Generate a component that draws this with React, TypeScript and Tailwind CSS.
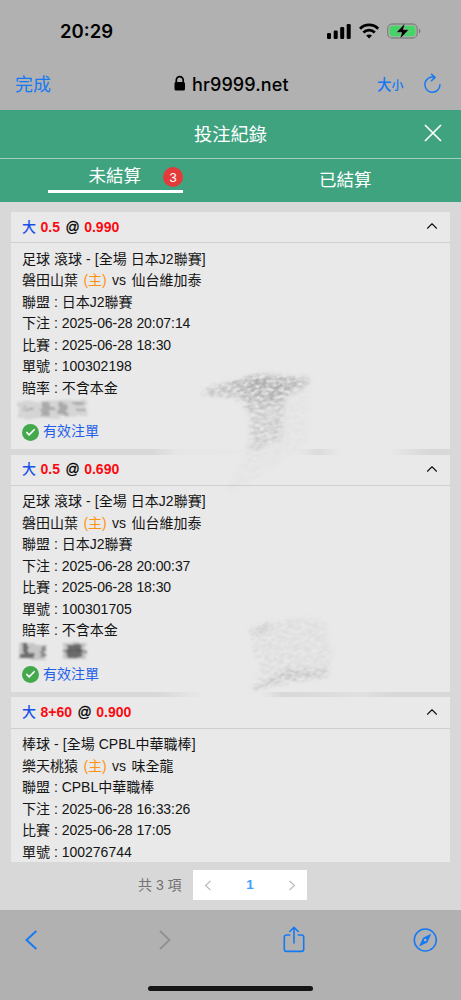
import { Check, ChevronUp } from 'lucide-react';
import clsx from 'clsx';

interface Bet {
  id: string;
  stake: string;
  odds: string;
  title: string;
  home: string;
  away: string;
  league: string;
  placedAt: string;
  matchAt: string;
  payout?: string;
  status?: string;
}

const BETS: Bet[] = [
  {
    id: '100302198',
    stake: '0.5',
    odds: '0.990',
    title: '足球 滾球 - [全場 日本J2聯賽]',
    home: '磐田山葉',
    away: '仙台維加泰',
    league: '日本J2聯賽',
    placedAt: '2025-06-28 20:07:14',
    matchAt: '2025-06-28 18:30',
    payout: '不含本金',
    status: '有效注單',
  },
  {
    id: '100301705',
    stake: '0.5',
    odds: '0.690',
    title: '足球 滾球 - [全場 日本J2聯賽]',
    home: '磐田山葉',
    away: '仙台維加泰',
    league: '日本J2聯賽',
    placedAt: '2025-06-28 20:00:37',
    matchAt: '2025-06-28 18:30',
    payout: '不含本金',
    status: '有效注單',
  },
  {
    id: '100276744',
    stake: '8+60',
    odds: '0.900',
    title: '棒球 - [全場 CPBL中華職棒]',
    home: '樂天桃猿',
    away: '味全龍',
    league: 'CPBL中華職棒',
    placedAt: '2025-06-28 16:33:26',
    matchAt: '2025-06-28 17:05',
  },
];

function StatusBar() {
  return (
    <div className="flex h-[58px] items-center pt-1 pl-[60px]">
      <span className="w-[267px] pt-px font-['Inter'] text-[18.5px] leading-none font-semibold">20:29</span>
      <svg width="95" height="18" viewBox="0 0 95 18" className="-mt-px">
        <rect x="0" y="11" width="4" height="6" rx="1.2" />
        <rect x="6.7" y="8.5" width="4" height="8.5" rx="1.2" />
        <rect x="13.2" y="5" width="4" height="12" rx="1.2" />
        <rect x="19.7" y="2" width="4" height="15" rx="1.2" />
        <g fill="none" stroke="#000" strokeWidth="2.7">
          <path d="M33 6.7c5-5 13.2-5 18.2 0" />
          <path d="M36.4 10.5c3.2-3.2 8.2-3.2 11.4 0" />
        </g>
        <path d="M42.1 16.5l-2.9-3c1.6-1.5 4.2-1.5 5.8 0z" />
        <rect x="60.7" y="2" width="29.5" height="14" rx="4.6" fill="none" stroke="#7d8580" strokeWidth="1.3" />
        <rect x="62.5" y="3.7" width="26" height="10.6" rx="3" fill="#45d566" />
        <path d="M92 6.7c1.7.7 1.7 4 0 4.6z" fill="#6f7672" />
        <path d="M78.2 1l-9 9.4h5.5l-1.9 6.8 9.2-9.6h-5.6z" stroke="#b1b1b1" strokeWidth=".6" />
      </svg>
    </div>
  );
}

function AddressBar() {
  return (
    <div className="flex h-[52px] items-center text-[#1479f3]">
      <span className="w-[173px] pt-0.5 pl-[15px] text-[18px] leading-none">完成</span>
      <svg width="14" height="17" viewBox="0 0 14 17" fill="#000" className="-mt-0.5">
        <path d="M3.3 8V5a3.3 3.3 0 0 1 6.9 0v3" fill="none" stroke="#000" strokeWidth="1.7" />
        <rect x="1.5" y="7" width="10.5" height="8.5" rx="1.6" />
      </svg>
      <span className="ml-[5px] w-[185px] pt-px font-['Inter'] text-[18px] leading-none font-medium tracking-[0.1px] text-black">
        hr9999.net
      </span>
      <span className="w-[46px] pt-0.5 leading-none font-medium">
        <span className="text-[14.5px]">大</span>
        <span className="text-[12px]">小</span>
      </span>
      <svg width="20" height="22" viewBox="0 0 20 22" fill="none" stroke="currentColor" strokeWidth="1.5" strokeLinecap="round" strokeLinejoin="round">
        <path d="M11.5 4.3A7.6 7.6 0 1 0 17 11.8" />
        <path d="M8.5 1.2l3.5 3.2-3.5 3.4" />
      </svg>
    </div>
  );
}

function Header() {
  return (
    <header className="bg-[#40a380] text-white">
      <div className="flex h-[49px] items-center border-b border-[#9ed0bd] pl-[60px]">
        <h1 className="flex-1 pt-0.5 text-center text-[18.3px] leading-none font-normal">投注紀錄</h1>
        <div className="flex w-[60px] justify-center pr-px pl-[5px]">
          <svg width="18" height="18" viewBox="0 0 18 18" stroke="currentColor" strokeWidth="1.7" className="-mt-0.5">
            <path d="M1 1l16 16M17 1L1 17" />
          </svg>
        </div>
      </div>
      <div className="flex h-[43px]">
        <div className="w-1/2 pl-12">
          <div className="flex h-[34px] w-[135px] items-center justify-end border-b-3 border-white pt-[5px]">
            <span className="mr-[22px] text-[17.5px] leading-none">未結算</span>
            <span className="flex size-5 items-center justify-center rounded-full bg-[#e33b39] text-[13px] leading-none">
              3
            </span>
          </div>
        </div>
        <div className="flex w-1/2 items-center justify-center pr-px text-[17.5px] leading-none">已結算</div>
      </div>
    </header>
  );
}

function BetCard({ bet }: { bet: Bet }) {
  const rows = [
    ['聯盟', bet.league],
    ['下注', bet.placedAt],
    ['比賽', bet.matchAt],
    ['單號', bet.id],
  ];
  if (bet.payout) rows.push(['賠率', bet.payout]);

  return (
    <article className="h-[237.4px] shrink-0 bg-[#e9e9e9] text-[14px] text-[#141414]">
      <div className="flex h-[31.3px] items-center gap-[5.5px] border-b border-[#cfcfcf] pr-2.5 pl-[11px] font-bold">
        <span className="-mr-px font-medium text-[#1850e8]">大</span>
        <span className="text-[#fb0a10]">{bet.stake}</span>
        <span className="font-medium text-black [-webkit-text-stroke:0.3px]">@</span>
        <span className="-ml-px text-[#fb0a10]">{bet.odds}</span>
        <ChevronUp size={18} strokeWidth={1.5} className="-mr-px -mt-0.5 ml-auto" />
      </div>
      <div className="px-[11px] pt-[5.5px] leading-[21.5px] whitespace-nowrap">
        <p className="tracking-[0.05px]">{bet.title}</p>
        <p>
          {bet.home} <span className="mr-[1.5px] ml-[1.5px] text-[#ff930f]">(主)</span> vs{' '}
          <span className="ml-[1.5px]">{bet.away}</span>
        </p>
        {rows.map(([label, value]) => (
          <p key={label}>
            {label} : <span className={clsx(value.startsWith('2025') && 'tracking-[-0.07px]')}>{value}</span>
          </p>
        ))}
        {bet.status && (
          <div className="mt-[22px] flex items-center gap-1 text-[#1f5fea]">
            <span className="flex size-[17px] items-center justify-center rounded-full bg-[#43a94c] text-white">
              <Check size={11} strokeWidth={3.6} />
            </span>
            {bet.status}
          </div>
        )}
      </div>
    </article>
  );
}

// Hand-erased marks over the cards: grain comes from turbulence, edges from soft blobs.
function EraserMarks() {
  return (
    <svg className="pointer-events-none absolute top-0 left-0" width="461" height="661" viewBox="0 202 461 661">
      <defs>
        <filter id="grain" x="-10%" y="-10%" width="120%" height="120%">
          <feTurbulence type="fractalNoise" baseFrequency="0.17 0.3" numOctaves="3" seed="7" result="n" />
          <feColorMatrix in="n" type="matrix" values="0 0 0 0 0.3  0 0 0 0 0.3  0 0 0 0 0.3  2.2 0 0 0 -0.5" result="a" />
          <feGaussianBlur in="SourceGraphic" stdDeviation="2" result="s" />
          <feDisplacementMap in="s" in2="n" scale="6" xChannelSelector="R" yChannelSelector="G" result="d" />
          <feComposite in="d" in2="a" operator="in" result="c" />
          <feGaussianBlur in="c" stdDeviation="0.5" />
        </filter>
        <filter id="smear" x="-10%" y="-40%" width="120%" height="180%">
          <feTurbulence type="fractalNoise" baseFrequency="0.06 0.3" numOctaves="2" seed="3" result="n" />
          <feDisplacementMap in="SourceGraphic" in2="n" scale="7" result="d" />
          <feGaussianBlur in="d" stdDeviation="0.9" />
        </filter>
        <linearGradient id="fade" x1="0" y1="0" x2="0" y2="1">
          <stop offset="0" stopColor="#666" stopOpacity=".36" />
          <stop offset=".35" stopColor="#777" stopOpacity=".24" />
          <stop offset="1" stopColor="#888" stopOpacity=".22" />
        </linearGradient>
      </defs>

      {/* the filter region is tilted so the grain runs along the strokes */}
      <g transform="rotate(-12 262 430)">
        <g filter="url(#grain)">
          <g transform="rotate(12 262 430)">
            <path d="M203 389l57-15 50 4-2 7-22 12-4 42-32 14 2-36-12-18-36-4z" fill="url(#fade)" />
            <path d="M231 383l30-8 34 6-12 18-26 8z" fill="#666" fillOpacity=".2" />
            <path d="M204 391l39 8 6 45-24 50 27-14 56-38 2-60z" fill="#888" fillOpacity=".06" />
            <path d="M249 627l53-11 25 7 1 18 6 12-6 22-73 12 5-24-6-10z" fill="#888" fillOpacity=".11" />
            <path d="M253 688l36-20 39 1v8l-38 4-36 10z" fill="#777" fillOpacity=".22" />
            <path d="M249 632l25-10-8 8z" fill="#777" fillOpacity=".4" />
          </g>
        </g>
      </g>

      <g filter="url(#smear)">
        <path d="M18 402l69-3-1 17-67 3z" fill="#999" fillOpacity=".25" />
        <path d="M21 407h12v3H21zM41 402h9v14h-9zM38 407h17v3H38zM59 403h8v12h-8zM72 402h12v3H72zM76 408h10v3H76z" fill="#777" fillOpacity=".45" />
        <path d="M19 643h27v17H19zM63 643h23v16H63z" fill="#888" fillOpacity=".35" />
        <path d="M20 653h14v6H20zM23 644h5v15h-5zM67 645h15v12H67z" fill="#222" fillOpacity=".55" />
        <path d="M41 644h4v14h-4zM64 650h22v2H64z" fill="#444" fillOpacity=".5" />
      </g>
    </svg>
  );
}

function BetList() {
  return (
    <main className="relative h-[661px] overflow-hidden px-[11px] pt-2.5">
      <div className="flex h-[650px] flex-col overflow-hidden">
        {BETS.map((bet, i) => (
          <div key={bet.id} className="shrink-0">
            <BetCard bet={bet} />
            <div
              className={clsx(
                'h-[5.3px]',
                i === 0 &&
                  'bg-[linear-gradient(90deg,transparent_32%,#e6e6e6_38%,#e9e9e9_65%,#dbdbdb_70%,#e9e9e9_75%,#e9e9e9_86%,transparent_95%)]',
                i === 1 &&
                  'bg-[linear-gradient(90deg,transparent_33%,#e9e9e9_44%,#e9e9e9_57%,transparent_62%,#e0e0e0_80%,transparent_87%)]',
              )}
            />
          </div>
        ))}
      </div>
      <EraserMarks />
    </main>
  );
}

function Pagination() {
  return (
    <div className="flex h-[47px] items-start pt-[7px] pl-[138px]">
      <span className="w-[55px] text-[14px] leading-[30px] text-[#737373]">共 3 項</span>
      <div className="flex h-[30px] w-[114px] items-center justify-between bg-white px-[11px] text-[#bcbcbc]">
        <svg width="8" height="11" viewBox="0 0 8 11" fill="none" stroke="currentColor" strokeWidth="1.2">
          <path d="M6.5 1L1.5 5.5l5 4.5" />
        </svg>
        <span className="text-[13.5px] font-bold text-[#409eff]">1</span>
        <svg width="8" height="11" viewBox="0 0 8 11" fill="none" stroke="currentColor" strokeWidth="1.2">
          <path d="M1.5 1l5 4.5-5 4.5" />
        </svg>
      </div>
    </div>
  );
}

function BrowserToolbar() {
  return (
    <footer className="h-[90px] bg-[#b1b1b1] pt-4">
      <div className="flex h-7 items-center pl-6 text-[#1479f3]">
        <svg width="14" height="22" viewBox="0 0 14 22" fill="none" stroke="currentColor" strokeWidth="1.9">
          <path d="M12.3 2L2.5 11l9.8 9" />
        </svg>
        <svg width="14" height="22" viewBox="0 0 14 22" fill="none" stroke="#919191" strokeWidth="1.9" className="ml-[120px]">
          <path d="M2 2l9.5 9L2 20" />
        </svg>
        <svg width="24" height="28" viewBox="0 0 24 28" fill="none" stroke="currentColor" strokeWidth="1.6" strokeLinecap="round" strokeLinejoin="round" className="ml-[110px]">
          <path d="M7.7 9H4.5a2.2 2.2 0 0 0-2.2 2.2v12a2.2 2.2 0 0 0 2.2 2.2h15a2.2 2.2 0 0 0 2.2-2.2v-12A2.2 2.2 0 0 0 19.5 9h-3.2" />
          <path d="M12 17V1.5M7.8 5.5L12 1.3l4.2 4.2" />
        </svg>
        <svg width="24" height="24" viewBox="0 0 24 24" fill="none" stroke="currentColor" strokeWidth="1.5" className="ml-[107px]">
          <circle cx="12.3" cy="12" r="11" />
          <path d="M18.3 5.7l-3.9 8.8-8.3 4.1 3.9-8.8z" fill="currentColor" stroke="none" />
          <circle cx="12.2" cy="12.1" r="1.4" fill="#b1b1b1" stroke="none" />
        </svg>
      </div>
      <div className="mx-auto mt-[32px] h-[5px] w-[165px] rounded-full bg-[#151515]" />
    </footer>
  );
}

export default function App() {
  return (
    <div className="h-[1000px] w-[461px] overflow-hidden bg-[#d8d8d8] font-['Liberation_Sans','Noto_Sans_CJK_TC',sans-serif]">
      <div className="h-[110px] bg-[#b1b1b1]">
        <StatusBar />
        <AddressBar />
      </div>
      <Header />
      <BetList />
      <Pagination />
      <BrowserToolbar />
    </div>
  );
}
